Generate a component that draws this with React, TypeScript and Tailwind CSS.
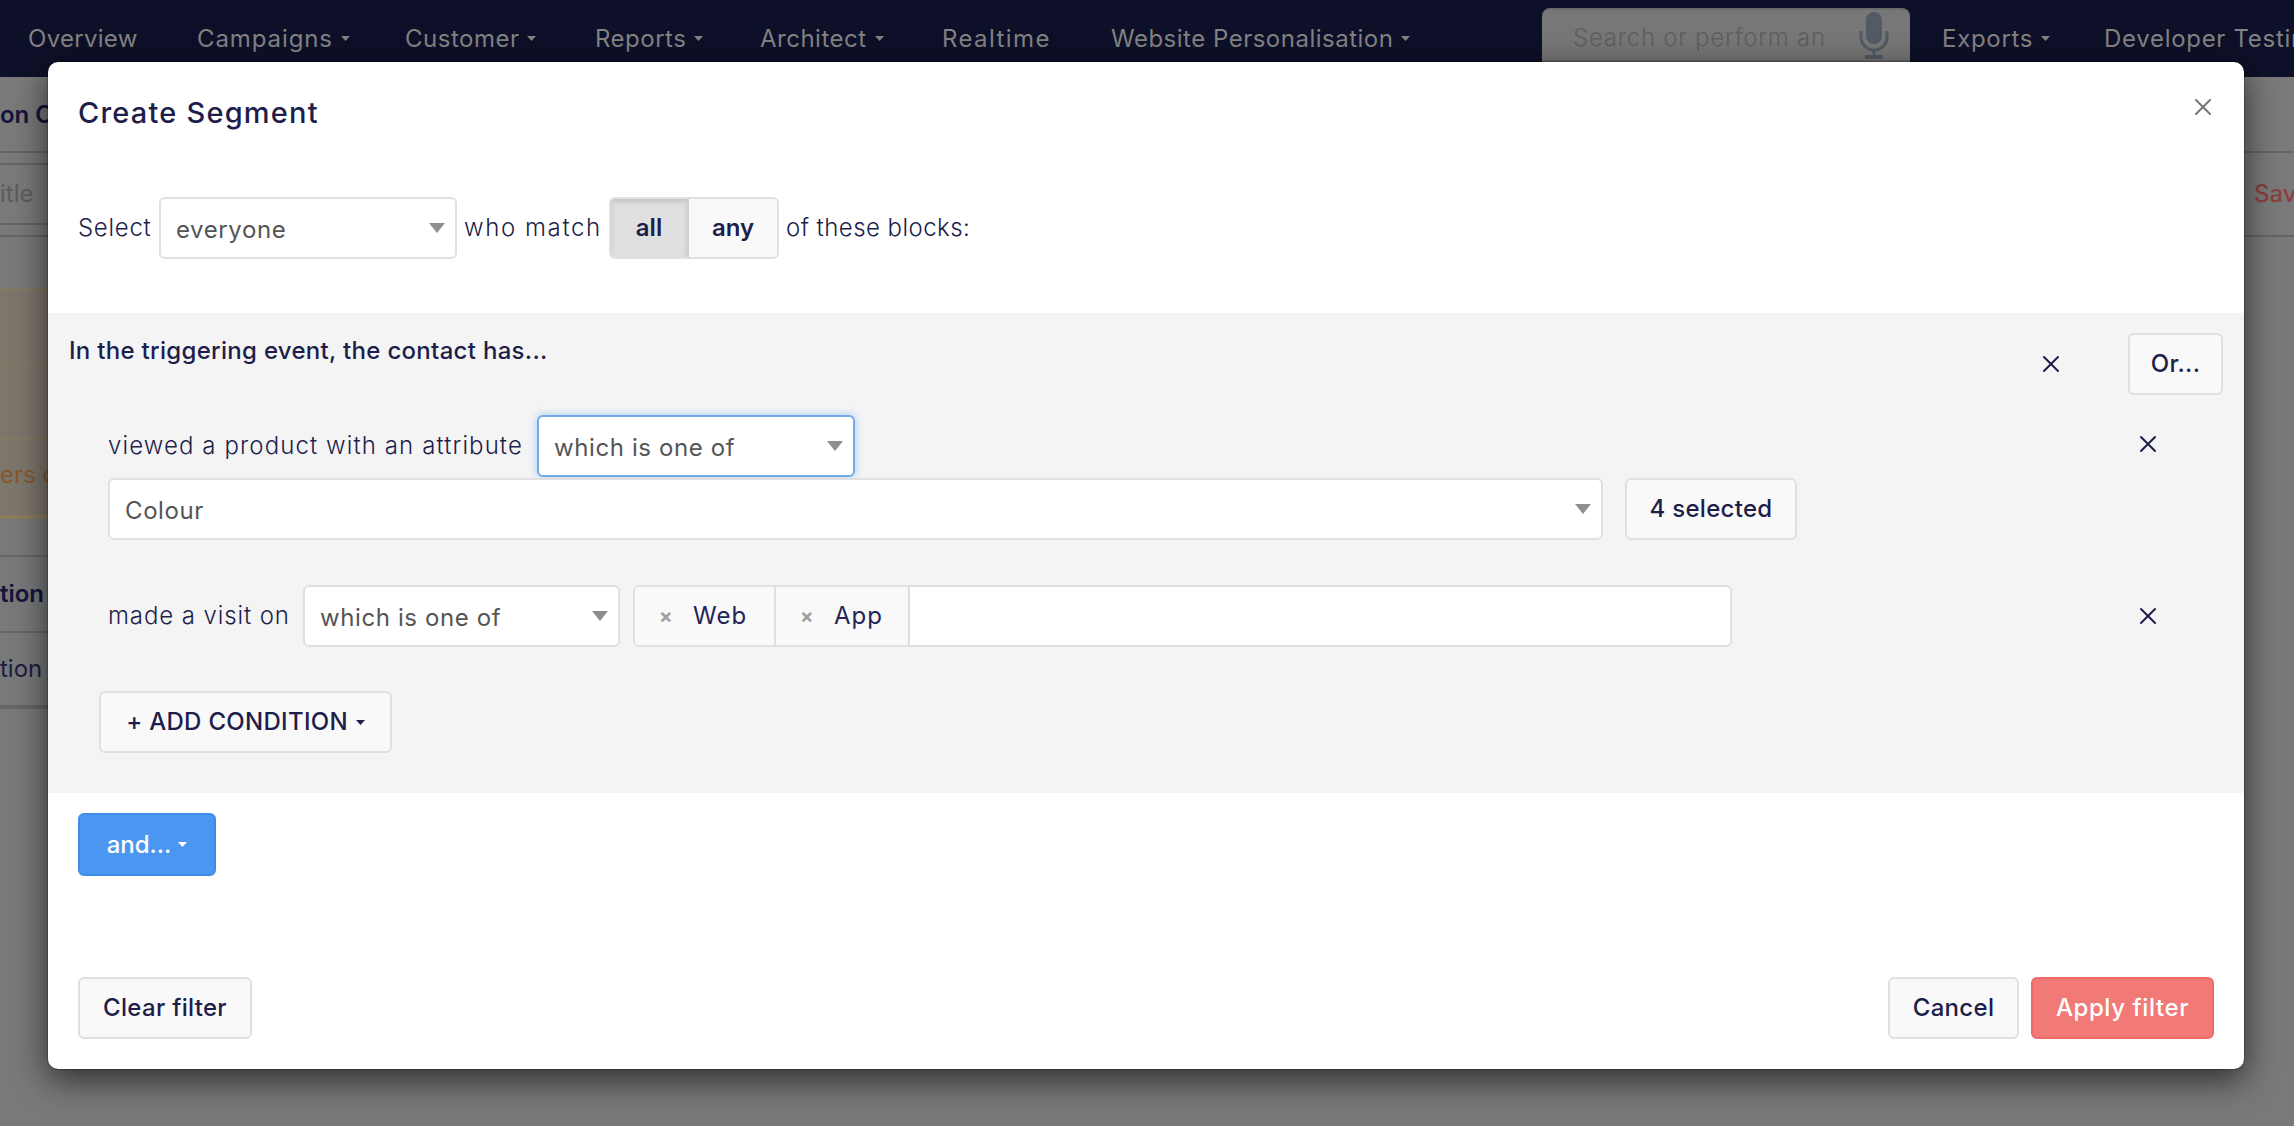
import React from 'react';
import { X } from 'lucide-react';

const NAV = [
  { label: 'Overview', box: 'w-[169px]', text: 'tracking-[0.3px]' },
  { label: 'Campaigns', box: 'w-[208px]', text: 'tracking-[0.9px]', caret: true },
  { label: 'Customer', box: 'w-[190px]', text: 'tracking-[0.5px]', caret: true },
  { label: 'Reports', box: 'w-[165px]', text: 'tracking-[0.5px]', caret: true },
  { label: 'Architect', box: 'w-[182px]', text: 'tracking-[0.5px]', caret: true },
  { label: 'Realtime', box: 'w-[169px]', text: 'tracking-[1.4px]' },
  { label: 'Website Personalisation', box: 'w-[431px]', text: 'tracking-[0.5px]', caret: true },
];

const Caret = ({ className }: { className?: string }) => (
  <svg width="9" height="5" viewBox="0 0 9 5" className={className}>
    <polygon points="0,0 9,0 4.5,5" fill="currentColor" />
  </svg>
);

const Arrow = () => (
  <svg width="16" height="10" viewBox="0 0 16 10" className="shrink-0 text-[#8f8f8f]">
    <polygon points="0,0 16,0 8,10" fill="currentColor" />
  </svg>
);

const Cross = ({ className = 'text-[#1e1e4b]' }: { className?: string }) => (
  <X size={28} strokeWidth={1.7} className={`shrink-0 ${className}`} />
);

const Select = ({ value, box, focused }: { value: string; box: string; focused?: boolean }) => (
  <div
    className={`flex h-[62px] items-center justify-between rounded-[6px] border-2 bg-white pl-[15px] pr-[10px] text-[#555555] ${box} ${
      focused ? 'border-[#74aae8] shadow-[0_0_8px_rgba(102,175,233,0.6)]' : 'border-[#e0e0e0]'
    }`}
  >
    <span className="mt-[3px] tracking-[0.6px]">{value}</span>
    <Arrow />
  </div>
);

const Btn = ({ label, box, children }: { label: string; box: string; children?: React.ReactNode }) => (
  <div
    className={`flex h-[62px] shrink-0 items-center justify-center gap-[8px] rounded-[6px] border-2 border-[#e0e0e0] bg-[#f9f9f9] font-medium tracking-[0.3px] text-[#1e1e4b] ${box}`}
  >
    {label}
    {children}
  </div>
);

const Tag = ({ label, box }: { label: string; box: string }) => (
  <div className={`flex h-full items-center border-r-2 border-[#dedede] bg-[#f9f9f9] text-[#24245a] ${box}`}>
    <span className="w-[58px] pl-[24px] text-[20px] font-bold leading-none text-[#a0a0a0]">×</span>
    <span className="tracking-[1px]">{label}</span>
  </div>
);

export default function App() {
  return (
    <div className="relative h-[1126px] w-[2294px] overflow-hidden bg-[#77797b] text-[24px] [font-family:Inter,sans-serif]">
      {/* top nav, dimmed by the modal backdrop */}
      <div className="flex h-[77px] items-center overflow-hidden bg-[#0e1029] pl-[28px] text-[#828282]">
        {NAV.map((item) => (
          <div key={item.label} className={`flex shrink-0 items-center gap-[8px] ${item.box}`}>
            <span className={item.text}>{item.label}</span>
            {item.caret && <Caret />}
          </div>
        ))}
        <div className="mt-[8px] flex h-[54px] w-[368px] shrink-0 items-center justify-between self-start rounded-t-[8px] border-y-2 border-[#6b6b6b] bg-[#777777] pl-[31px] pr-[21px]">
          <span className="mt-[6px] font-light tracking-[0.75px] text-[#5f5f5f]">Search or perform an</span>
          <svg width="30" height="48" viewBox="0 0 30 48" className="shrink-0 text-[#525a66]">
            <rect x="7" y="1" width="16" height="32" rx="8" fill="currentColor" />
            <path d="M2 20v6a13 13 0 0 0 26 0v-6" fill="none" stroke="currentColor" strokeWidth="3" />
            <path d="M15 39v6" stroke="currentColor" strokeWidth="3" />
            <rect x="6" y="44" width="18" height="4" rx="1" fill="currentColor" />
          </svg>
        </div>
        <div className="ml-[32px] flex w-[162px] shrink-0 items-center gap-[8px]">
          <span className="tracking-[0.7px]">Exports</span>
          <Caret />
        </div>
        <span className="shrink-0 tracking-[0.7px]">Developer Testing</span>
      </div>

      {/* page behind the modal */}
      <div className="flex h-[76px] items-center border-b-2 border-[#656565] bg-[#7a7a7a] font-semibold text-[#14143a]">
        <span className="mt-[2px]">on C</span>
      </div>
      <div className="flex h-[84px] items-center justify-between border-b-2 border-[#656565] bg-[#7a7a7a]">
        <div className="flex h-[62px] w-[1000px] items-center border-y-2 border-[#656565] text-[#5d5d5d]">itle</div>
        <span className="w-[40px] font-medium text-[#8b3f3f]">Sav</span>
      </div>
      <div className="mt-[51px] w-[1000px]">
        <div className="h-[76px] border-y border-[#8a7a60] bg-[#7d766b]" />
        <div className="h-[76px] border-b border-[#8a7a60] bg-[#7d766b]" />
        <div className="flex h-[79px] items-center border-b-4 border-[#8c7c5e] bg-[#7d766b] pb-[6px] text-[#85582f]">
          ers c
        </div>
        <div className="h-[38px] border-b-2 border-[#666666]" />
        <div className="flex h-[76px] items-center border-b-2 border-[#666666] font-semibold text-[#14143a]">tion</div>
        <div className="flex h-[76px] items-center border-b-4 border-[#666666] text-[#1c1c40]">tion</div>
      </div>

      {/* modal */}
      <div className="absolute left-[48px] top-[62px] flex h-[1007px] w-[2196px] flex-col rounded-[10px] bg-white text-[#1e1e4b] shadow-[0_0_0_1px_rgba(0,0,0,0.2),0_10px_34px_rgba(0,0,0,0.65)]">
        <div className="flex items-start justify-between pl-[30px] pr-[27px] pt-[31px]">
          <h1 className="text-[29px] font-medium leading-[40px] tracking-[1.2px]">Create Segment</h1>
          <X size={28} strokeWidth={1.7} className="text-[#777777]" />
        </div>

        <div className="mt-[64px] flex items-center pl-[30px]">
          <span className="w-[81px] font-light tracking-[0.7px]">Select</span>
          <Select value="everyone" box="w-[298px]" />
          <span className="ml-[7px] w-[145px] font-light tracking-[1.6px]">who match</span>
          <div className="flex h-[62px] w-[170px] overflow-hidden rounded-[6px] border-2 border-[#e0e0e0] font-semibold">
            <div className="flex w-[78px] items-center justify-center border-r-2 border-[#cfcfcf] bg-[#e0e0e0] shadow-[inset_0_3px_5px_rgba(0,0,0,0.125)]">
              all
            </div>
            <div className="flex flex-1 items-center justify-center bg-[#f9f9f9]">any</div>
          </div>
          <span className="ml-[7px] font-light tracking-[0.45px]">of these blocks:</span>
        </div>

        <div className="mt-[54px] flex flex-col bg-[#f4f4f4] pb-[40px] pt-[20px]">
          <div className="flex items-start justify-between pl-[21px] pr-[21px]">
            <span className="font-medium tracking-[0.3px]">In the triggering event, the contact has...</span>
            <div className="flex items-center gap-[63px]">
              <Cross />
              <Btn label="Or..." box="w-[95px]" />
            </div>
          </div>

          <div className="mt-[20px] flex items-start justify-between pl-[60px] pr-[82px]">
            <div className="flex flex-col gap-[1px]">
              <div className="flex items-center">
                <span className="w-[429px] font-light tracking-[1.1px]">viewed a product with an attribute</span>
                <Select value="which is one of" box="w-[318px]" focused />
              </div>
              <div className="flex gap-[22px]">
                <Select value="Colour" box="w-[1495px]" />
                <Btn label="4 selected" box="w-[172px]" />
              </div>
            </div>
            <Cross className="mt-[15px] text-[#1e1e4b]" />
          </div>

          <div className="mt-[45px] flex items-center justify-between pl-[60px] pr-[82px]">
            <div className="flex items-center">
              <span className="w-[195px] font-light tracking-[0.9px]">made a visit on</span>
              <Select value="which is one of" box="w-[317px]" />
              <div className="ml-[13px] flex h-[62px] w-[1099px] overflow-hidden rounded-[6px] border-2 border-[#e0e0e0] bg-white">
                <Tag label="Web" box="w-[141px]" />
                <Tag label="App" box="w-[134px]" />
              </div>
            </div>
            <Cross />
          </div>

          <div className="ml-[51px] mt-[44px]">
            <Btn label="+ ADD CONDITION" box="w-[293px]">
              <Caret />
            </Btn>
          </div>
        </div>

        <div className="ml-[30px] mt-[20px] flex h-[63px] w-[138px] items-center justify-center gap-[7px] rounded-[6px] border-2 border-[#3f8ce8] bg-[#4a96f0] font-medium text-white">
          and...
          <Caret />
        </div>

        <div className="mt-auto flex items-center justify-between px-[30px] pb-[30px]">
          <Btn label="Clear filter" box="w-[174px]" />
          <div className="flex gap-[12px]">
            <Btn label="Cancel" box="w-[131px]" />
            <div className="flex h-[62px] w-[183px] items-center justify-center rounded-[6px] border-2 border-[#ef6a66] bg-[#f27a76] font-medium tracking-[0.6px] text-white">
              Apply filter
            </div>
          </div>
        </div>
      </div>
    </div>
  );
}
